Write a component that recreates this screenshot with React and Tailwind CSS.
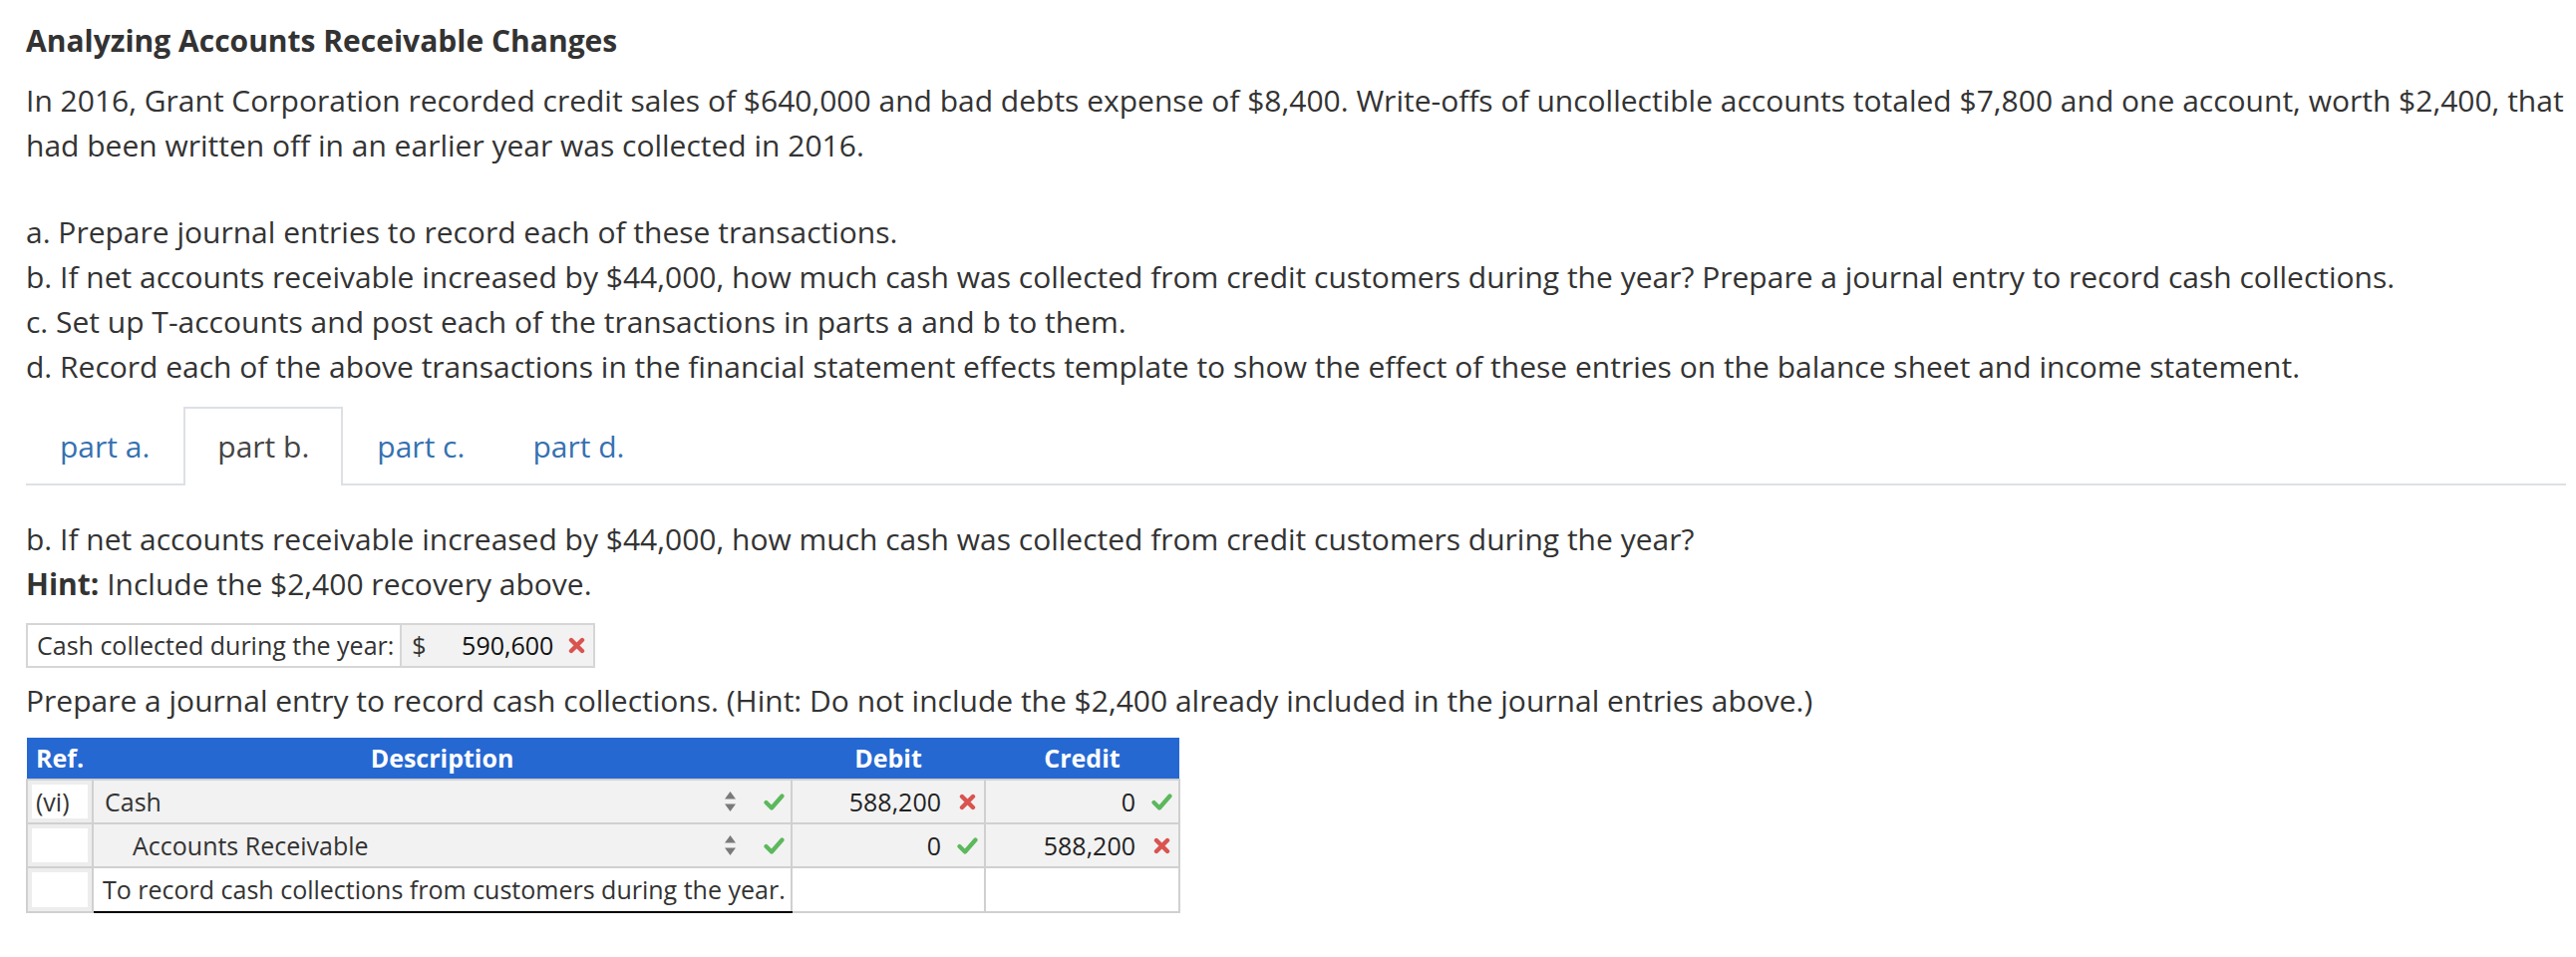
const Check = () => (
    <svg width="21" height="19" viewBox="0 0 21 19" className="shrink-0">
        <path d="M2.5 10 L8 15.5 L18.5 3.5" fill="none" stroke="#5cb85c" strokeWidth="4.2" strokeLinecap="round" strokeLinejoin="round" />
    </svg>
);

const Cross = () => (
    <svg width="17" height="17" viewBox="0 0 17 17" className="shrink-0">
        <path d="M3 3 L14 14 M14 3 L3 14" fill="none" stroke="#d9534f" strokeWidth="4.4" strokeLinecap="round" />
    </svg>
);

const Spinner = () => (
    <svg width="13" height="26" viewBox="0 0 13 26" className="shrink-0">
        <path d="M6.5 3 L12 10.5 L1 10.5 Z" fill="#7a7a7a" />
        <path d="M6.5 23 L12 15.5 L1 15.5 Z" fill="#7a7a7a" />
    </svg>
);

const Amount = ({ value, ok }) => (
    <div className="flex items-center justify-end h-full pr-[6px] gap-[15px]">
        <span className="text-[#222]">{value}</span>
        <span className="w-[22px] flex justify-center">{ok ? <Check /> : <Cross />}</span>
    </div>
);

const tabs = ['part a.', 'part b.', 'part c.', 'part d.'];

const cell = 'border-2 border-[#d0d0d0]';
const refCell = 'border-2 border-[#d0d0d0] bg-white shadow-[inset_0_0_0_4px_#ededed]';

const App = () => {
    const active = 1;

    return (
        <div className="min-h-screen bg-white pl-[26px] pr-[10px] pt-[18px] font-['Open_Sans',sans-serif] text-[30px] leading-[45px] text-[#333]">
            <h1 className="font-bold text-[30px] leading-[45px]">Analyzing Accounts Receivable Changes</h1>
            <p className="mt-[15px]">
                In 2016, Grant Corporation recorded credit sales of $640,000 and bad debts expense of $8,400. Write-offs of uncollectible accounts totaled $7,800 and one account, worth $2,400, that had been written off in an earlier year was collected in 2016.
            </p>
            <div className="mt-[42px]">
                <div>a. Prepare journal entries to record each of these transactions.</div>
                <div>b. If net accounts receivable increased by $44,000, how much cash was collected from credit customers during the year? Prepare a journal entry to record cash collections.</div>
                <div>c. Set up T-accounts and post each of the transactions in parts a and b to them.</div>
                <div>d. Record each of the above transactions in the financial statement effects template to show the effect of these entries on the balance sheet and income statement.</div>
            </div>

            <div className="mt-[18px] flex border-b-2 border-[#dde1e6]">
                {tabs.map((t, i) => (
                    <div
                        key={t}
                        className={
                            i === active
                                ? 'px-[32px] pt-[15px] pb-[17px] border-2 border-b-0 border-[#dde1e6] bg-white -mb-[2px] text-[#444]'
                                : 'px-[32px] py-[15px] border-2 border-transparent border-b-0 text-[#3571b0]'
                        }
                    >
                        {t}
                    </div>
                ))}
            </div>

            <p className="mt-[31px]">
                b. If net accounts receivable increased by $44,000, how much cash was collected from credit customers during the year?
            </p>
            <p>
                <span className="font-bold">Hint:</span> Include the $2,400 recovery above.
            </p>

            <div className="mt-[17px] inline-flex h-[45px] border-2 border-[#d6d6d6] text-[25px] leading-none">
                <div className="flex items-center bg-white pl-[9px] pr-[6px] whitespace-nowrap border-r-2 border-[#d6d6d6]">
                    Cash collected during the year:
                </div>
                <div className="flex items-center bg-[#f2f2f2] w-[192px] pl-[10px] pr-[8px]">
                    <span>$</span>
                    <span className="ml-auto text-[#111]">590,600</span>
                    <span className="ml-[15px]"><Cross /></span>
                </div>
            </div>

            <p className="mt-[10px]">
                Prepare a journal entry to record cash collections. (Hint: Do not include the $2,400 already included in the journal entries above.)
            </p>

            <table className="mt-[15px] table-fixed border-collapse text-[25px] leading-none w-[1156px]">
                <colgroup>
                    <col className="w-[66px]" />
                    <col className="w-[701px]" />
                    <col className="w-[194px]" />
                    <col className="w-[195px]" />
                </colgroup>
                <thead>
                    <tr className="h-[42px] bg-[#2668d2] text-white font-bold">
                        <th className="text-left pl-[9px]">Ref.</th>
                        <th className="text-center">Description</th>
                        <th className="text-center">Debit</th>
                        <th className="text-center">Credit</th>
                    </tr>
                </thead>
                <tbody>
                    <tr className="h-[44px]">
                        <td className={`${refCell} pl-[8px]`}>(vi)</td>
                        <td className={`${cell} bg-[#f2f2f2] p-0`}>
                            <div className="flex items-center h-full pl-[11px] pr-[6px]">
                                <span>Cash</span>
                                <span className="ml-auto"><Spinner /></span>
                                <span className="ml-[27px]"><Check /></span>
                            </div>
                        </td>
                        <td className={`${cell} bg-[#f2f2f2] p-0`}><Amount value="588,200" ok={false} /></td>
                        <td className={`${cell} bg-[#f2f2f2] p-0`}><Amount value="0" ok /></td>
                    </tr>
                    <tr className="h-[44px]">
                        <td className={refCell}></td>
                        <td className={`${cell} bg-[#f2f2f2] p-0`}>
                            <div className="flex items-center h-full pl-[39px] pr-[6px]">
                                <span>Accounts Receivable</span>
                                <span className="ml-auto"><Spinner /></span>
                                <span className="ml-[27px]"><Check /></span>
                            </div>
                        </td>
                        <td className={`${cell} bg-[#f2f2f2] p-0`}><Amount value="0" ok /></td>
                        <td className={`${cell} bg-[#f2f2f2] p-0`}><Amount value="588,200" ok={false} /></td>
                    </tr>
                    <tr className="h-[45px]">
                        <td className={refCell}></td>
                        <td className={`${cell} border-b-black bg-white pl-[9px]`}>To record cash collections from customers during the year.</td>
                        <td className={`${cell} bg-white`}></td>
                        <td className={`${cell} bg-white`}></td>
                    </tr>
                </tbody>
            </table>
        </div>
    );
};

export default App;
